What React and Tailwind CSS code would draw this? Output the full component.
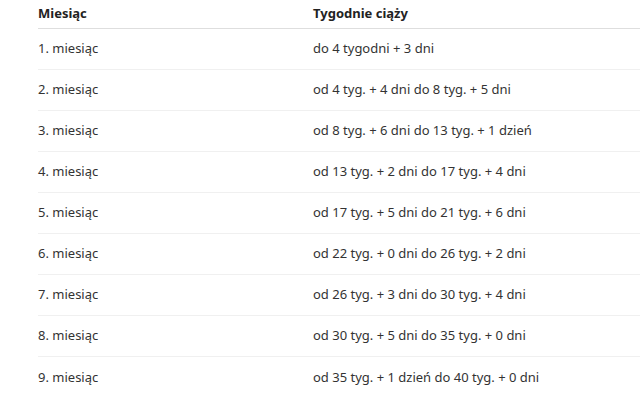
const rows = [
  ["1. miesiąc", "do 4 tygodni + 3 dni"],
  ["2. miesiąc", "od 4 tyg. + 4 dni do 8 tyg. + 5 dni"],
  ["3. miesiąc", "od 8 tyg. + 6 dni do 13 tyg. + 1 dzień"],
  ["4. miesiąc", "od 13 tyg. + 2 dni do 17 tyg. + 4 dni"],
  ["5. miesiąc", "od 17 tyg. + 5 dni do 21 tyg. + 6 dni"],
  ["6. miesiąc", "od 22 tyg. + 0 dni do 26 tyg. + 2 dni"],
  ["7. miesiąc", "od 26 tyg. + 3 dni do 30 tyg. + 4 dni"],
  ["8. miesiąc", "od 30 tyg. + 5 dni do 35 tyg. + 0 dni"],
  ["9. miesiąc", "od 35 tyg. + 1 dzień do 40 tyg. + 0 dni"],
];

export default function App() {
  return (
    <div
      className="w-[640px] h-[404px] bg-white overflow-hidden pl-[38px] text-[13px] text-[#333]"
      style={{ fontFamily: '"Noto Sans", "Open Sans", sans-serif' }}
    >
      <div className="flex h-[29px] items-center border-b border-[#dedede] font-bold text-[#222]">
        <div className="w-[275px]">Miesiąc</div>
        <div className="flex-1">Tygodnie ciąży</div>
      </div>
      {rows.map(([m, t]) => (
        <div
          key={m}
          className="flex h-[41px] items-center border-b border-[#f0f0f0] last:border-b-0"
        >
          <div className="w-[275px]">{m}</div>
          <div className="flex-1">{t}</div>
        </div>
      ))}
    </div>
  );
}
